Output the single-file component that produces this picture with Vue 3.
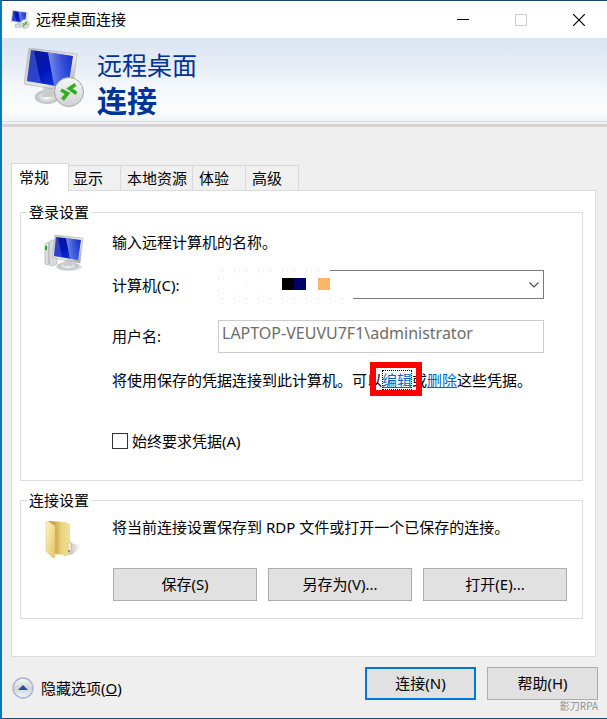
<template>
  <div class="window">
    <header class="titlebar">
      <svg class="title-icon" viewBox="0 0 64 64" aria-hidden="true">
        <use href="#remote-monitor" />
      </svg>
      <h1 class="title">远程桌面连接</h1>
      <div class="controls">
        <button type="button" class="control" aria-label="最小化">
          <svg viewBox="0 0 12 12"><path d="M0 5.5H12" stroke="#000" /></svg>
        </button>
        <button type="button" class="control" aria-label="最大化" disabled>
          <svg viewBox="0 0 12 12">
            <rect x=".5" y=".5" width="11" height="11" fill="none" stroke="#ccc" />
          </svg>
        </button>
        <button type="button" class="control" aria-label="关闭">
          <svg viewBox="0 0 12 12"><path d="M0 0L12 12M12 0L0 12" stroke="#000" stroke-width="1.2" /></svg>
        </button>
      </div>
    </header>

    <div class="banner">
      <svg class="banner-icon" viewBox="0 0 64 64" aria-hidden="true">
        <defs>
          <linearGradient id="screen" x1="0" y1="0" x2="1" y2="1">
            <stop offset="0" stop-color="#0a1a8c" />
            <stop offset=".45" stop-color="#0215b8" />
            <stop offset="1" stop-color="#1747ec" />
          </linearGradient>
          <linearGradient id="shine" x1="0" y1="0" x2="1" y2="0">
            <stop offset="0" stop-color="#a9bcff" stop-opacity=".75" />
            <stop offset="1" stop-color="#5f80f0" stop-opacity=".15" />
          </linearGradient>
          <linearGradient id="frame" x1="0" y1="0" x2="1" y2="1">
            <stop offset="0" stop-color="#c2c2c2" />
            <stop offset=".6" stop-color="#e9e9e9" />
            <stop offset="1" stop-color="#989898" />
          </linearGradient>
          <radialGradient id="stand">
            <stop offset="0" stop-color="#fff" />
            <stop offset="1" stop-color="#b9bcbf" />
          </radialGradient>
          <linearGradient id="badge" x1="0" y1="0" x2="0" y2="1">
            <stop offset="0" stop-color="#f7f7f7" />
            <stop offset="1" stop-color="#cfd1d2" />
          </linearGradient>
          <g id="remote-monitor">
            <ellipse cx="23" cy="50" rx="12" ry="7" fill="url(#stand)" />
            <path d="M20 38L30 40L29 50H18Z" fill="#c9cbcd" />
            <path d="M5 1L53 7L48 45L0 37Z" fill="url(#frame)" stroke="#aaa" stroke-width=".6" />
            <path d="M7 3L49 9L44 41L3 34Z" fill="url(#screen)" />
            <path d="M24 5.500L49 9L44 41L30 38.500Z" fill="url(#shine)" />
            <path d="M7 3L10 3.500L17 36.500L3 34Z" fill="#8fa9ff" opacity=".3" />
            <circle cx="45" cy="45" r="14.500" fill="url(#badge)" stroke="#a4a6a8" />
            <path
              d="M37 43L43.500 46.500L38.500 52.500M51.500 37.500L45.500 41.500L52.500 46.500"
              fill="none"
              stroke="#32ad1d"
              stroke-width="3.6"
            />
          </g>
        </defs>
        <use href="#remote-monitor" />
      </svg>
      <div class="banner-text">
        <span class="banner-top">远程桌面</span>
        <strong class="banner-bottom">连接</strong>
      </div>
    </div>

    <main class="content">
      <div class="tabs" role="tablist">
        <button
          v-for="tab in tabs"
          :key="tab"
          type="button"
          role="tab"
          class="tab"
          :class="{ active: tab === activeTab }"
          :aria-selected="tab === activeTab"
          @click="activeTab = tab"
        >
          {{ tab }}
        </button>
      </div>

      <div class="panel" role="tabpanel">
        <fieldset class="group login">
          <legend>登录设置</legend>
          <svg class="group-icon" viewBox="0 0 40 42" aria-hidden="true">
            <path d="M1 12L8 8L13 9V32L8 34L1 32Z" fill="#d9dbdd" stroke="#b3b6b8" stroke-width=".7" />
            <path d="M5 11V32" stroke="#a3a6a8" />
            <path d="M2 14V18" stroke="#28a428" stroke-width="2" />
            <ellipse cx="25" cy="35" rx="13" ry="4" fill="#999" opacity=".3" />
            <ellipse cx="24" cy="34" rx="11" ry="4" fill="url(#stand)" />
            <path d="M21 26L28 28V34H20Z" fill="#c9cbcd" />
            <path d="M11 3L39 6L36 31L8 26Z" fill="url(#frame)" stroke="#aaa" stroke-width=".5" />
            <path d="M12 5L37 8L34 28L10 24Z" fill="url(#screen)" />
            <path d="M22 6.200L37 8L34 28L26 26.700Z" fill="url(#shine)" />
            <path d="M12 5L14 5.200L18 25.300L10 24Z" fill="#8fa9ff" opacity=".3" />
          </svg>
          <div class="fields">
            <p class="line">输入远程计算机的名称。</p>
            <div class="row">
              <label for="computer">计算机(C):</label>
              <div class="combo">
                <select id="computer" v-model="computer" class="computer">
                  <option value=""></option>
                </select>
                <svg class="chevron" viewBox="0 0 10 6" aria-hidden="true">
                  <path d="M.5 .5L5 5L9.500 .5" fill="none" stroke="#444" stroke-width="1.1" />
                </svg>
                <!-- pixelated cover over the saved address -->
                <svg class="mosaic" viewBox="0 0 136 32" aria-hidden="true">
                  <path d="M0 0H112V28H135V32H0Z" fill="#fff" />
                  <path d="M4 1.500H112" stroke="#ccc" stroke-dasharray="1 11" />
                  <path d="M4 29.500H130" stroke="#ccc" stroke-dasharray="1 11" />
                  <path d="M.5 9V22" stroke="#ccc" stroke-dasharray="1 11" />
                  <path d="M16.500 9V22M28.500 12V22M40.500 9V22" stroke="#e4e4e4" stroke-dasharray="1 9" />
                  <rect x="64" y="9" width="12" height="12" fill="#000" />
                  <rect x="76" y="9" width="12" height="12" fill="#000068" />
                  <rect x="100" y="9" width="12" height="12" fill="#ffb566" />
                </svg>
              </div>
            </div>
            <div class="row user-row">
              <label for="user">用户名:</label>
              <input id="user" v-model="user" class="user" type="text" readonly />
            </div>
            <p class="line saved">
              将使用保存的凭据连接到此计算机。可以<span class="marked"
                ><a href="#" class="focused" @click.prevent>编辑</a></span
              >或<a href="#" @click.prevent>删除</a>这些凭据。
            </p>
            <label class="check">
              <input v-model="alwaysAsk" type="checkbox" />
              <span>始终要求凭据(A)</span>
            </label>
          </div>
        </fieldset>

        <fieldset class="group connection">
          <legend>连接设置</legend>
          <svg class="group-icon" viewBox="0 0 40 42" aria-hidden="true">
            <defs>
              <linearGradient id="folder" x1="0" y1="0" x2="1" y2="0">
                <stop offset="0" stop-color="#b8933a" />
                <stop offset=".35" stop-color="#cfae50" />
                <stop offset=".6" stop-color="#e9d27c" />
                <stop offset="1" stop-color="#f3e29c" />
              </linearGradient>
              <linearGradient id="flap" x1="0" y1="0" x2="1" y2="1">
                <stop offset="0" stop-color="#fff4c4" />
                <stop offset="1" stop-color="#e3c464" />
              </linearGradient>
              <linearGradient id="shadow" x1="0" y1="0" x2="1" y2="0">
                <stop offset="0" stop-color="#777" stop-opacity=".7" />
                <stop offset="1" stop-color="#999" stop-opacity="0" />
              </linearGradient>
            </defs>
            <path d="M20 39L27 26L38 29L29 37Z" fill="url(#shadow)" />
            <path d="M4 4L21 5L26 7V36L23 38L10 37Z" fill="url(#folder)" />
            <path d="M2 5L4 4L11 9V40L9 41L2 34Z" fill="url(#flap)" stroke="#dcc470" stroke-width=".5" />
            <path d="M24 26L27 25V34L24 36Z" fill="#f7f3df" stroke="#d1b45c" stroke-width=".6" />
            <path d="M25 33V35" stroke="#5b9bd5" stroke-width="2" />
          </svg>
          <div class="fields">
            <p class="line">将当前连接设置保存到 RDP 文件或打开一个已保存的连接。</p>
            <div class="actions">
              <button v-for="action in actions" :key="action" type="button" class="btn">
                {{ action }}
              </button>
            </div>
          </div>
        </fieldset>
      </div>
    </main>

    <footer class="footer">
      <button type="button" class="toggle">
        <svg viewBox="0 0 22 22" aria-hidden="true">
          <defs>
            <linearGradient id="knob" x1="0" y1="0" x2="0" y2="1">
              <stop offset="0" stop-color="#fdfdfd" />
              <stop offset=".5" stop-color="#cfd5d3" />
              <stop offset="1" stop-color="#f2f7f3" />
            </linearGradient>
          </defs>
          <circle cx="11" cy="11" r="10" fill="url(#knob)" stroke="#a9afd6" stroke-width="1.3" />
          <path d="M6 13L11 8L16 13Z" fill="#2f48b0" />
        </svg>
        <span>隐藏选项(<u>O</u>)</span>
      </button>
      <div class="footer-buttons">
        <button type="button" class="btn primary">连接(N)</button>
        <button type="button" class="btn">帮助(H)</button>
      </div>
      <span class="watermark">影刀RPA</span>
    </footer>
  </div>
</template>

<script setup>
import { ref } from 'vue'

const tabs = ['常规', '显示', '本地资源', '体验', '高级']
const actions = ['保存(S)', '另存为(V)...', '打开(E)...']

const activeTab = ref('常规')
const computer = ref('')
const user = ref('LAPTOP-VEUVU7F1\\administrator')
const alwaysAsk = ref(false)
</script>

<style>
body {
  background-color: #efefef;
}
</style>

<style scoped>
.window {
  box-sizing: border-box;
  display: flex;
  flex-direction: column;
  min-height: 100vh;
  border-top: 1px solid #17456b;
  border-bottom: 1px solid #17506f;
  border-left: 2px solid #0a78bd;
  background-color: #efefef;
  color: #000;
  font-family: 'Noto Sans', 'Noto Sans CJK SC', sans-serif;
  font-size: 15px;
  line-height: 20px;
}

button,
input,
select {
  box-sizing: border-box;
  margin: 0;
  font: inherit;
  color: inherit;
}

.titlebar {
  display: flex;
  align-items: center;
  height: 37px;
  padding-left: 9px;
  background-color: #fff;
}

.title-icon {
  width: 20px;
  height: 20px;
  margin-right: 5px;
}

.title {
  flex: 1;
  margin: 0;
  padding-bottom: 2px;
  font-size: 15px;
  font-weight: 400;
}

.controls {
  display: flex;
  gap: 2px;
}

.control {
  display: flex;
  align-items: center;
  justify-content: center;
  width: 56px;
  height: 37px;
  padding: 0;
  border: none;
  background: none;
}

.control svg {
  width: 12px;
  height: 12px;
}

.banner {
  display: flex;
  height: 84px;
  padding: 9px 0 0 22px;
  box-sizing: border-box;
  background: linear-gradient(#dae5f3, #e5ecf6 30%, #f4f8fb 60%, #fbfdfc 88%, #f0f5fa);
  border-bottom: 1px solid #dadcde;
  box-shadow: 0 2px 0 #f2f2f2, 0 5px 0 #d4d4d4;
}

.banner-icon {
  width: 64px;
  height: 64px;
}

.banner-text {
  display: flex;
  flex-direction: column;
  margin-left: 9px;
  color: #003399;
}

.banner-top {
  font-size: 25px;
  line-height: 36px;
}

.banner-bottom {
  font-size: 30px;
  line-height: 36px;
}

.content {
  margin-top: 41px;
  padding: 0 11px 0 9px;
}

.tabs {
  display: flex;
  align-items: flex-end;
  height: 27px;
}

.tab {
  width: 52px;
  height: 25px;
  padding: 0 4px;
  border: 1px solid #d9d9d9;
  border-bottom: none;
  border-left: none;
  background-color: #f0f0f0;
  text-align: left;
}

.tab:nth-child(3) {
  width: 72px;
  padding-left: 6px;
}

.tab:nth-child(n + 4) {
  width: 53px;
  padding-left: 6px;
}

.tab.active {
  position: relative;
  width: 58px;
  height: 28px;
  margin-bottom: -1px;
  padding: 0 7px 2px;
  border-left: 1px solid #d9d9d9;
  background-color: #fff;
}

.panel {
  padding: 11px 12px 37px 8px;
  border: 1px solid #dcdcdc;
  background-color: #fff;
}

.group {
  display: grid;
  grid-template-columns: 91px 1fr;
  margin: 0;
  border: 1px solid #dcdcdc;
  min-width: 0;
}

.login {
  padding: 10px 38px 29px 0;
}

.connection {
  margin-top: 9px;
  padding: 7px 15px 17px 0;
}

legend {
  margin-left: 6px;
  padding: 0 2px;
}

.group-icon {
  width: 40px;
  height: 42px;
  margin-left: 23px;
}

.line {
  margin: 0;
  white-space: nowrap;
}

.row {
  display: grid;
  grid-template-columns: 106px 1fr;
  align-items: center;
  margin-top: 18px;
}

.user-row {
  margin-top: 21px;
}

.user-row label {
  padding-bottom: 2px;
}

.combo {
  position: relative;
  height: 29px;
}

.computer {
  display: block;
  width: 100%;
  height: 29px;
  appearance: none;
  border: 1px solid #7a7a7a;
  border-radius: 0;
  background-color: #fff;
}

.chevron {
  position: absolute;
  right: 5px;
  top: 12px;
  width: 10px;
  height: 6px;
  pointer-events: none;
}

.mosaic {
  position: absolute;
  left: 0;
  top: -1px;
  width: 136px;
  height: 32px;
  pointer-events: none;
}

.user {
  width: 100%;
  height: 33px;
  padding: 0 3px 7px;
  border: 1px solid #ccc;
  outline: none;
  background-color: #fff;
  color: #6d6d6d;
  font-size: 16px;
}

.saved {
  margin-top: 17px;
}

a {
  color: #0066cc;
  text-decoration: underline;
}

.marked {
  position: relative;
}

/* highlight frame drawn over the link */
.marked::after {
  content: '';
  position: absolute;
  inset: -8px -10px -6px -12px;
  border: 6px solid #f00;
  pointer-events: none;
}

.focused {
  outline: 1px dotted #000;
  outline-offset: -1px;
}

.check {
  display: flex;
  align-items: center;
  gap: 4px;
  margin-top: 41px;
}

.check input {
  width: 16px;
  height: 16px;
  appearance: none;
  border: 1px solid #333;
  background-color: #fff;
}

.check input:checked {
  box-shadow: inset 0 0 0 3px #fff;
  background-color: #333;
}

.actions {
  display: grid;
  grid-template-columns: repeat(3, 1fr);
  gap: 11px;
  margin-top: 31px;
  padding-left: 1px;
}

.btn {
  height: 33px;
  padding: 0 4px 2px;
  border: 1px solid #adadad;
  background-color: #e1e1e1;
}

.btn.primary {
  border: 2px solid #0078d7;
}

.footer {
  position: relative;
  display: flex;
  align-items: flex-start;
  justify-content: space-between;
  padding: 10px 9px 18px 10px;
}

.toggle {
  display: flex;
  align-items: center;
  gap: 7px;
  margin-top: 10px;
  padding: 0;
  border: none;
  background: none;
}

.toggle svg {
  width: 22px;
  height: 22px;
}

.footer-buttons {
  display: grid;
  grid-template-columns: 111px 111px;
  gap: 11px;
}

.watermark {
  position: absolute;
  right: 9px;
  bottom: 6px;
  color: #909090;
  font-family: 'Noto Sans CJK SC', sans-serif;
  font-size: 10px;
  line-height: 12px;
}
</style>
